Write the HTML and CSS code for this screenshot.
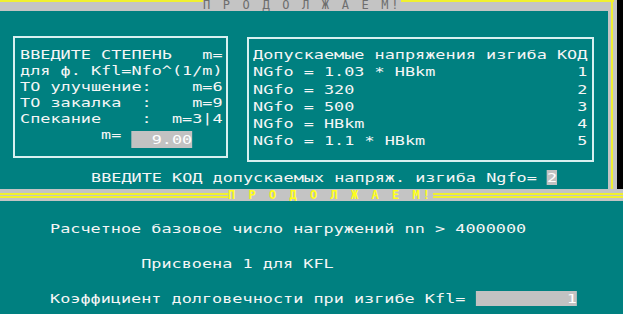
FILE: index.html
```html
<!DOCTYPE html>
<html lang="ru">
<head>
<meta charset="utf-8">
<title>Продолжаем</title>
<link rel="stylesheet" href="styles.css">
</head>
<body>
<div class="upper">
  <div class="main">
    <div class="topbar"><span class="rule rule-left"></span><span class="ttl">П Р О Д О Л Ж А Е М!</span><span class="rule rule-right"></span></div>
    <div class="boxes">
      <div class="lbox"><div class="txt">ВВЕДИТЕ СТЕПЕНЬ   m=
для ф. Kfl=Nfo^(1/m)
ТО улучшение:    m=6
ТО закалка  :    m=9
Спекание    :  m=3|4
        m= <span class="fld fld-low">  9.00</span></div></div>
      <div class="rbox"><div class="txt">Допускаемые напряжения изгиба КОД
NGfo = 1.03 * HBkm              1
NGfo = 320                      2
NGfo = 500                      3
NGfo = HBkm                     4
NGfo = 1.1 * HBkm               5</div></div>
    </div>
    <div class="prompt"><div class="txt">ВВЕДИТЕ КОД допускаемых напряж. изгиба Ngfo= <span class="fld">2</span></div></div>
  </div>
  <div class="vborder"></div>
  <div class="blackcol"></div>
</div>
<div class="midbar"><span class="rule rule-left"></span><span class="ttl">П Р О Д О Л Ж А Е М!</span><span class="rule rule-right"></span></div>
<div class="lower"><div class="txt">Расчетное базовое число нагружений nn &gt; 4000000

         Присвоена 1 для KFL

Коэффициент долговечности при изгибе Kfl= <span class="fld">         1</span></div></div>
</body>
</html>
```
FILE: styles.css
```css
html, body {
  margin: 0;
  padding: 0;
  overflow: hidden;
}
body {
  width: 623px;
  height: 314px;
  background: #008080;
  font-family: "DejaVu Sans Mono", monospace;
}

.txt {
  font-size: 13px;
  white-space: pre;
  color: #f6f6f6;
  width: max-content;
  transform: scaleX(1.2945);
  transform-origin: 0 0;
}
.fld {
  background: #c2c2c2;
  color: #ffffff;
}
.fld-low {
  display: inline-block;
  line-height: 17px;
  vertical-align: -5px;
}

/* upper window */
.upper {
  display: flex;
  height: 189px;
}
.main {
  width: 608px;
  display: flex;
  flex-direction: column;
  background: #008080;
}
.vborder {
  width: 9px;
  background:
    linear-gradient(#f0f030 0 2px, transparent 2px) 0 0 / 6px 100% no-repeat,
    linear-gradient(to right, #c4c4c4 3px, #f0f030 3px 5px, #c4c4c4 5px);
}
.blackcol {
  width: 6px;
  background: #000;
}

.topbar {
  height: 11px;
  background: #c4c4c4;
  display: flex;
  overflow: hidden;
}
.topbar .rule {
  border-top: 2px solid #f0f030;
}
.topbar .rule-left {
  width: 203px;
}
.topbar .rule-right {
  flex: 1;
}
.topbar .ttl {
  font-size: 12px;
  line-height: 10px;
  letter-spacing: 2.68px;
  color: #6e6e6e;
  white-space: pre;
}

.boxes {
  display: flex;
  align-items: flex-start;
  margin-top: 25px;
}
.lbox {
  box-sizing: border-box;
  width: 215px;
  height: 122px;
  margin-left: 13px;
  padding: 9px 0 0 5px;
  border: 2px solid #d8f0f0;
}
.lbox .txt {
  line-height: 16.1px;
}
.rbox {
  box-sizing: border-box;
  width: 347px;
  height: 125px;
  margin-left: 19px;
  margin-top: 1px;
  padding: 7px 0 0 4px;
  border: 2px solid #d8f0f0;
}
.rbox .txt {
  line-height: 17.3px;
}

.prompt {
  margin-top: 7px;
  padding-left: 91px;
}
.prompt .txt {
  line-height: 17.3px;
}

/* separator bar */
.midbar {
  height: 12px;
  background: #c4c4c4;
  display: flex;
  align-items: center;
}
.midbar .rule {
  height: 1px;
  border-top: 2px solid #f0f030;
  border-bottom: 2px solid #f0f030;
}
.midbar .rule-left {
  width: 228px;
}
.midbar .rule-right {
  flex: 1;
}
.midbar .ttl {
  font-size: 12px;
  line-height: 12px;
  letter-spacing: 3.03px;
  color: #ffff1a;
  font-weight: bold;
  white-space: pre;
}

/* lower window */
.lower {
  box-sizing: border-box;
  height: 113px;
  padding: 19px 0 0 50px;
}
.lower .txt {
  line-height: 17.4px;
}
```
